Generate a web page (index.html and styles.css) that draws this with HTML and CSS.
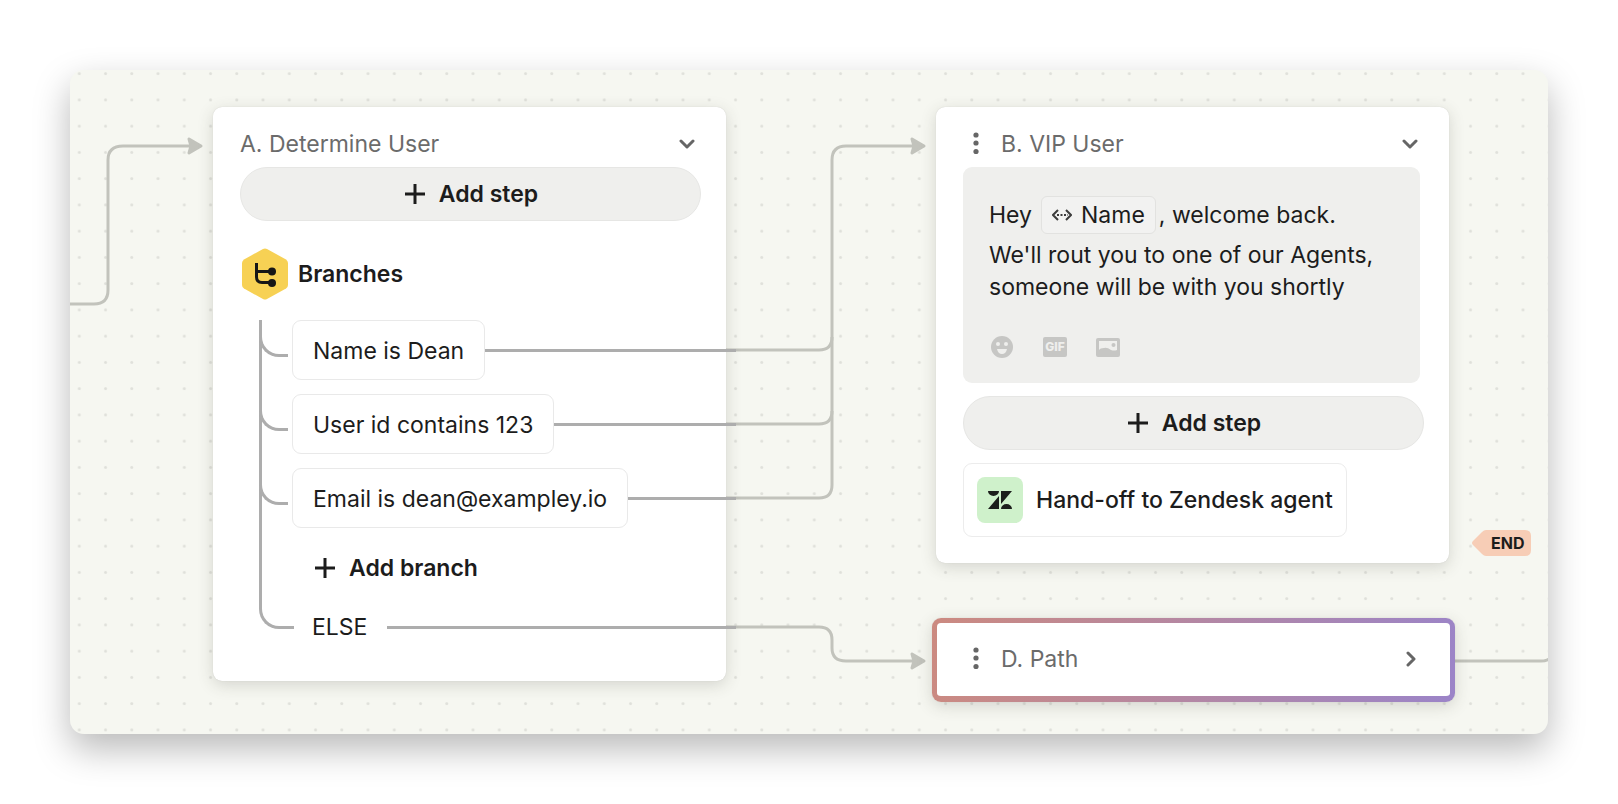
FILE: index.html
```html
<!DOCTYPE html>
<html lang="en">
<head>
    <meta charset="UTF-8">
    <meta name="viewport" content="width=device-width, initial-scale=1.0">
    <title>Workflow builder</title>
    <link rel="stylesheet" href="styles.css">
</head>
<body>
    <main class="canvas">
        <svg class="wires" aria-hidden="true">
            <defs>
                <pattern id="dots" x="-4" y="-9.5" width="26.25" height="26.25" patternUnits="userSpaceOnUse">
                    <circle cx="13.3" cy="13.2" r="1.5" fill="#dfe0da"/>
                </pattern>
            </defs>
            <rect width="100%" height="100%" fill="url(#dots)"/>
            <g class="wire">
                <path d="M0 234H24Q38 234 38 220V90Q38 76 53 76H122"/>
                <path d="M656 280H749Q762 280 762 267"/>
                <path d="M656 354H749Q762 354 762 341"/>
                <path d="M656 428H749Q762 428 762 415V90Q762 76 776 76H845"/>
                <path d="M656 557H749Q762 557 762 570V578Q762 591 776 591H845"/>
                <path d="M1380 591H1471Q1479 591 1480 587"/>
            </g>
            <g class="arrow">
                <path d="M119 69L131 76L119 83L121 76Z"/>
                <path d="M842 69L854 76L842 83L844 76Z"/>
                <path d="M842 584L854 591L842 598L844 591Z"/>
            </g>
        </svg>

        <section class="node node-a">
            <header class="node-header">
                <h2>A. Determine User</h2>
                <button class="icon-btn" aria-label="Collapse">
                    <svg width="16" height="16" viewBox="0 0 16 16"><path d="M2 5L8 11L14 5"/></svg>
                </button>
            </header>
            <button class="add-step">
                <svg class="plus" width="20" height="20" viewBox="0 0 20 20"><path d="M10 0V20M0 10H20"/></svg>
                Add step
            </button>
            <div class="branches-title">
                <svg width="46" height="52" viewBox="0 0 46 52">
                    <path d="M21 1Q23 0 25 1L44 11.5Q46 13 46 15V37Q46 39 44 40.5L25 51Q23 52 21 51L2 40.5Q0 39 0 37V15Q0 13 2 11.5Z" fill="#f7d154"/>
                    <path d="M14.5 15V29Q14.5 34.5 20 34.5H30M14.5 23.5H30" fill="none" stroke="#161616" stroke-width="3"/>
                    <circle cx="30" cy="23.5" r="4" fill="#161616"/>
                    <circle cx="30" cy="35" r="4" fill="#161616"/>
                </svg>
                <h3>Branches</h3>
            </div>
            <ul class="branches">
                <li class="branch"><span class="condition">Name is Dean</span><span class="line"></span></li>
                <li class="branch"><span class="condition">User id contains 123</span><span class="line"></span></li>
                <li class="branch"><span class="condition">Email is dean@exampley.io</span><span class="line"></span></li>
                <li class="add-row">
                    <button class="add-branch">
                        <svg class="plus" width="20" height="20" viewBox="0 0 20 20"><path d="M10 0V20M0 10H20"/></svg>
                        Add branch
                    </button>
                </li>
                <li class="else-row"><span>ELSE</span><span class="line"></span></li>
            </ul>
        </section>

        <section class="node node-b">
            <header class="node-header">
                <svg class="grip" width="6" height="24" viewBox="0 0 6 24"><circle cx="3" cy="3" r="2.6"/><circle cx="3" cy="11" r="2.6"/><circle cx="3" cy="19.5" r="2.6"/></svg>
                <h2>B. VIP User</h2>
                <button class="icon-btn" aria-label="Collapse">
                    <svg width="16" height="16" viewBox="0 0 16 16"><path d="M2 5L8 11L14 5"/></svg>
                </button>
            </header>
            <div class="message">
                <p class="greeting">
                    <span>Hey</span>
                    <span class="variable">
                        <svg width="20" height="12" viewBox="0 0 20 12"><path d="M6 1L1 6L6 11M14 1L19 6L14 11"/><path d="M5 6H16" stroke-dasharray="2 1.5"/></svg>
                        Name
                    </span>
                    <span>, welcome back.</span>
                </p>
                <p>We'll rout you to one of our Agents,<br>someone will be with you shortly</p>
                <div class="tools">
                    <button aria-label="Emoji">
                        <svg width="24" height="24" viewBox="0 0 24 24">
                            <circle cx="12" cy="12" r="11" fill="#c6c6c4"/>
                            <circle cx="8" cy="9" r="2" fill="#efefed"/>
                            <circle cx="16" cy="9" r="2" fill="#efefed"/>
                            <path d="M7 14H17Q16 19 12 19T7 14Z" fill="#efefed"/>
                        </svg>
                    </button>
                    <button class="gif">GIF</button>
                    <button aria-label="Image">
                        <svg width="24" height="24" viewBox="0 0 24 24">
                            <rect y="3" width="24" height="19" rx="2" fill="#c6c6c4"/>
                            <path d="M3 6H21V15Q18 16 15 15Q11 12 8 13Q4 13 3 15Z" fill="#efefed"/>
                            <circle cx="17.5" cy="10" r="2" fill="#c6c6c4"/>
                        </svg>
                    </button>
                </div>
            </div>
            <button class="add-step">
                <svg class="plus" width="20" height="20" viewBox="0 0 20 20"><path d="M10 0V20M0 10H20"/></svg>
                Add step
            </button>
            <div class="handoff">
                <span class="zendesk">
                    <svg width="24" height="20" viewBox="0 0 24 20" fill="#1c1f1c">
                        <path d="M0 1H11A5.5 5 0 0 1 0 1ZM11 6V19H0ZM13 14V1H24ZM13 19A5.5 5 0 0 1 24 19Z"/>
                    </svg>
                </span>
                Hand-off to Zendesk agent
            </div>
        </section>

        <section class="node node-d">
            <header class="node-header">
                <svg class="grip" width="6" height="24" viewBox="0 0 6 24"><circle cx="3" cy="3" r="2.6"/><circle cx="3" cy="11" r="2.6"/><circle cx="3" cy="19.5" r="2.6"/></svg>
                <h2>D. Path</h2>
                <button class="icon-btn" aria-label="Expand">
                    <svg width="16" height="16" viewBox="0 0 16 16"><path d="M5 2L11 8L5 14"/></svg>
                </button>
            </header>
        </section>

        <span class="end-tag">
            <svg width="59" height="26" viewBox="0 0 59 26" aria-hidden="true"><path d="M14 0H53Q59 0 59 6V20Q59 26 53 26H14Q12 26 10 24L1 15Q-1 13 1 11L10 2Q12 0 14 0Z" fill="#f7cdb6"/></svg>
            <span>END</span>
        </span>
    </main>
</body>
</html>
```
FILE: styles.css
```css
*, *::before {
    box-sizing: border-box;
}

body {
    margin: 0;
    padding: 70px;
    min-height: 100vh;
    display: flex;
    background: #fff;
    font-family: Inter, "Liberation Sans", sans-serif;
    font-size: 23px;
    line-height: 32px;
    color: #1c1c1c;
}

h2, h3, p, ul {
    margin: 0;
    padding: 0;
    font-size: inherit;
    font-weight: inherit;
}

button {
    padding: 0;
    border: none;
    background: none;
    color: inherit;
    font: inherit;
    cursor: pointer;
}

svg {
    display: block;
    flex-shrink: 0;
}

.canvas {
    position: relative;
    flex: 1;
    min-height: 664px;
    overflow: hidden;
    background: #f6f7f1;
    border-radius: 14px;
    box-shadow: 0 15px 36px rgba(0, 0, 0, 0.28);
}

.wires {
    position: absolute;
    inset: 0;
    width: 100%;
    height: 100%;
}

.wire {
    fill: none;
    stroke: #c2c3bc;
    stroke-width: 3;
}

.arrow {
    fill: #c2c3bc;
    stroke: #c2c3bc;
    stroke-width: 3;
    stroke-linejoin: round;
}

/* nodes */
.node {
    position: absolute;
    width: 513px;
    padding: 21px 25px 26px 27px;
    background: #fff;
    border-radius: 9px;
    box-shadow: 0 4px 16px rgba(60, 62, 48, 0.18), 0 0 1px rgba(60, 62, 48, 0.2);
}

.node-a {
    left: 143px;
    top: 37px;
    padding-bottom: 38px;
}

.node-b {
    left: 866px;
    top: 37px;
}

.node-header {
    display: flex;
    align-items: center;
    padding-right: 6px;
    margin-bottom: 7px;
    color: #6b6b6b;
}

.grip {
    margin-left: 10px;
    margin-right: 22px;
    fill: #666;
}

.icon-btn {
    margin-left: auto;
}

.icon-btn path {
    fill: none;
    stroke: #666;
    stroke-width: 3;
    stroke-linecap: round;
    stroke-linejoin: round;
}

.add-step {
    display: flex;
    align-items: center;
    justify-content: center;
    gap: 14px;
    width: 100%;
    height: 54px;
    padding-left: 2px;
    border: 1px solid #e6e6e4;
    border-radius: 27px;
    background: #efefed;
    font-weight: 600;
}

.plus path {
    stroke: #1c1c1c;
    stroke-width: 3;
}

/* branches */
.branches-title {
    display: flex;
    align-items: center;
    gap: 10px;
    margin: 27px 0 20px 2px;
    font-weight: 600;
}

.branches {
    position: relative;
    display: flex;
    flex-direction: column;
    gap: 14px;
    list-style: none;
    padding-left: 52px;
}

.branches::before {
    content: "";
    position: absolute;
    left: 19px;
    top: 0;
    bottom: 14px;
    width: 35px;
    border: solid #adadad;
    border-width: 0 0 3px 3px;
    border-bottom-left-radius: 20px;
}

.branch {
    position: relative;
    display: flex;
    align-items: center;
}

.branch::before {
    content: "";
    position: absolute;
    left: -33px;
    top: 13px;
    width: 29px;
    height: 24px;
    border: solid #adadad;
    border-width: 0 0 3px 3px;
    border-bottom-left-radius: 20px;
}

.condition {
    padding: 14px 20px 12px;
    border: 1px solid #e9e9e9;
    border-radius: 9px;
    background: #fff;
}

.line {
    flex: 1;
    height: 3px;
    margin-right: -35px;
    background: #adadad;
}

.add-row {
    padding: 10px 23px 0;
}

.add-branch {
    display: flex;
    align-items: center;
    gap: 14px;
    font-weight: 600;
}

.else-row {
    display: flex;
    align-items: center;
    gap: 20px;
    margin-top: 13px;
    padding-left: 20px;
}

/* message */
.message {
    margin-right: 4px;
    margin-bottom: 13px;
    padding: 29px 26px 24px;
    background: #efefed;
    border-radius: 9px;
}

.greeting {
    display: flex;
    align-items: center;
    margin-bottom: 5px;
}

.variable {
    display: flex;
    align-items: center;
    gap: 9px;
    margin: 0 3px 0 9px;
    padding: 2px 10px;
    border: 1px solid #e2e2e0;
    border-radius: 6px;
    background: #f2f2f1;
}

.variable path {
    fill: none;
    stroke: #3c3c3c;
    stroke-width: 2;
}

.tools {
    display: flex;
    align-items: center;
    gap: 29px;
    margin-top: 32px;
    padding-left: 1px;
}

.gif {
    width: 24px;
    height: 20px;
    border-radius: 2px;
    background: #c6c6c4;
    color: #efefed;
    font-size: 12px;
    font-weight: 800;
    line-height: 20px;
}

.handoff {
    display: flex;
    align-items: center;
    gap: 13px;
    width: fit-content;
    margin-top: 13px;
    padding: 13px;
    border: 1px solid #ececec;
    border-radius: 9px;
    font-weight: 500;
}

.zendesk {
    display: grid;
    place-items: center;
    width: 46px;
    height: 46px;
    border-radius: 8px;
    background: #cff1cb;
}

/* selected node */
.node-d {
    left: 862px;
    top: 548px;
    width: 523px;
    padding: 20px 25px 21px 26px;
    border: 5px solid transparent;
    border-bottom-width: 6px;
    background: linear-gradient(#fff, #fff) padding-box, linear-gradient(100deg, #cc8a80, #9b84c8) border-box;
}

.node-d .node-header {
    margin: 0;
}

.end-tag {
    position: absolute;
    left: 1402px;
    top: 460px;
    display: grid;
    align-items: center;
    font-size: 16px;
    font-weight: 700;
    line-height: 26px;
}

.end-tag > * {
    grid-area: 1 / 1;
}

.end-tag span {
    padding-left: 19px;
}
```
